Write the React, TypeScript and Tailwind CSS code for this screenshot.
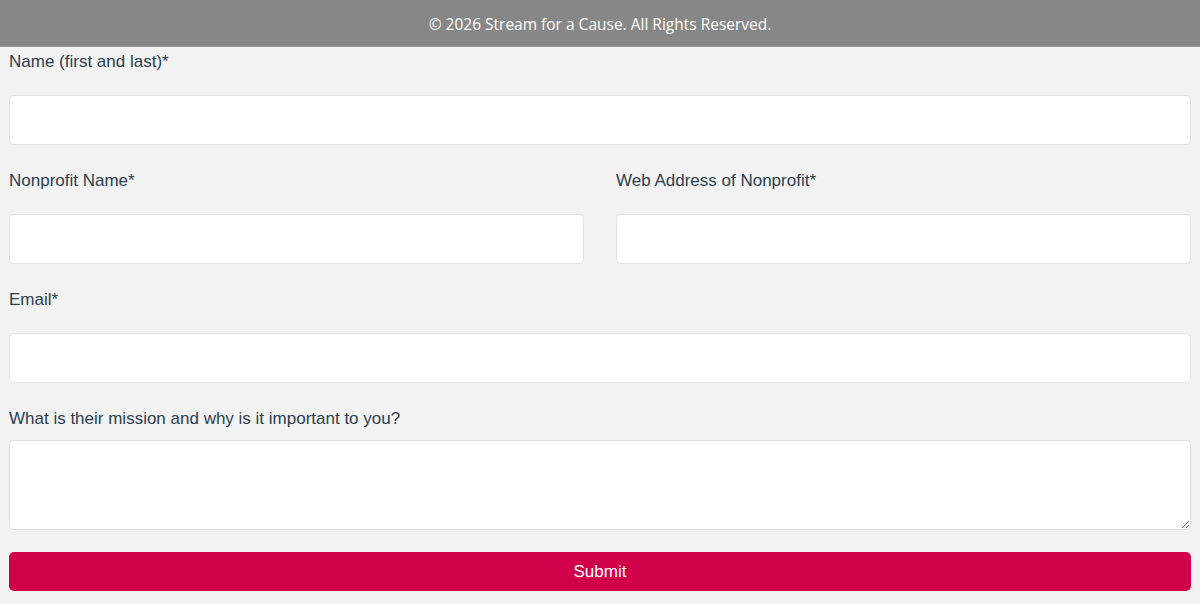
import React from 'react';

const labelCls = "block h-[26px] leading-[26px] text-[17px] text-[#2c3e50] mb-[20px]";
const inputCls =
  "block w-full h-[50px] rounded-[5px] border border-[#e3e3e3] bg-white px-3 text-[16px] outline-none";

function Field({ label, className = '' }: { label: string; className?: string }) {
  return (
    <div className={className}>
      <label className={labelCls}>{label}</label>
      <input type="text" className={inputCls} />
    </div>
  );
}

export default function App() {
  return (
    <div className="min-h-[604px] bg-[#f2f2f2]" style={{ fontFamily: '"Liberation Sans", Arial, sans-serif' }}>
      <header
        className="h-[47px] pt-[3px] bg-[#878787] border-b border-[#9a9a9a] flex items-center justify-center text-white text-[15.5px]"
        style={{ fontFamily: '"Open Sans", Lato, sans-serif' }}
      >
        © 2026 Stream for a Cause. All Rights Reserved.
      </header>
      <form className="px-[9px] pt-[2px] flex flex-col gap-[23px]" onSubmit={(e) => e.preventDefault()}>
        <Field label="Name (first and last)*" />
        <div className="grid grid-cols-2 gap-8">
          <Field label="Nonprofit Name*" />
          <Field label="Web Address of Nonprofit*" />
        </div>
        <Field label="Email*" />
        <div>
          <label className="block h-[26px] leading-[26px] text-[17px] text-[#2c3e50] mb-[8px]">
            What is their mission and why is it important to you?
          </label>
          <textarea className="block w-full h-[90px] rounded-[5px] border border-[#dcdfe4] bg-white px-3 py-2 text-[16px] outline-none resize-y" />
          <button
            type="submit"
            className="mt-[22px] w-full h-[39px] pt-px rounded-[5px] bg-[#d0004a] text-white text-[17px]"
          >
            Submit
          </button>
        </div>
      </form>
    </div>
  );
}
